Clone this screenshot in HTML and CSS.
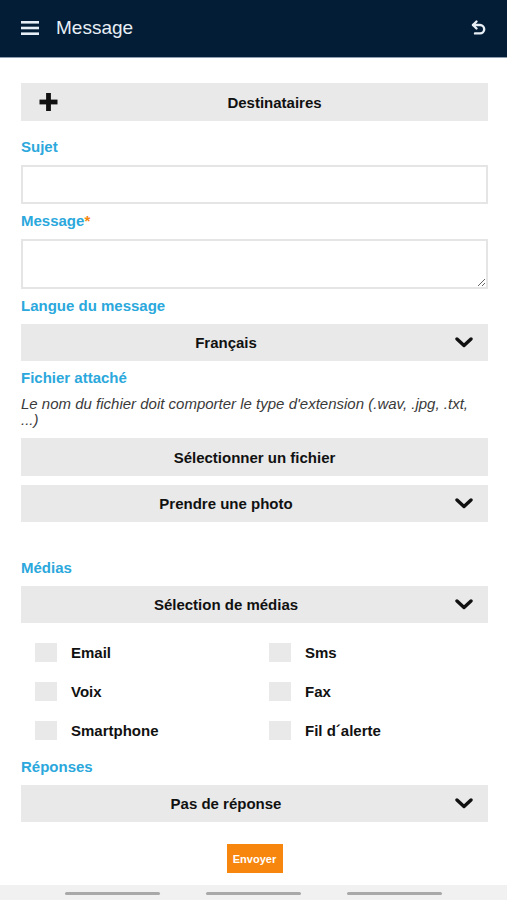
FILE: index.html
```html
<!DOCTYPE html>
<html lang="fr">
<head>
  <meta charset="UTF-8">
  <meta name="viewport" content="width=device-width, initial-scale=1.0">
  <title>Message</title>
  <link rel="stylesheet" href="styles.css">
</head>
<body>

<header class="topbar">
  <svg class="menu-icon" width="18" height="14" viewBox="0 0 18 14">
    <rect x="0" y="0" width="18" height="2.6" fill="#e8eef5"/>
    <rect x="0" y="5.7" width="18" height="2.6" fill="#e8eef5"/>
    <rect x="0" y="11.4" width="18" height="2.6" fill="#e8eef5"/>
  </svg>
  <span class="topbar-title">Message</span>
  <svg class="back-icon" width="16" height="17" viewBox="0 0 16 17">
    <path d="M3 6 H10 a4.2 4.2 0 0 1 0 8.4 H5" fill="none" stroke="#e8eef5" stroke-width="2.4" stroke-linecap="round"/>
    <polyline points="6.5,2.5 3,6 6.5,9.5" fill="none" stroke="#e8eef5" stroke-width="2.4" stroke-linecap="round" stroke-linejoin="round"/>
  </svg>
</header>

<main class="form">
  <button class="bar bar-left-icon recipients">
    <svg class="plus-icon" width="18" height="18" viewBox="0 0 18 18">
      <rect x="6.6" y="0" width="4.8" height="18" fill="#111"/>
      <rect x="0" y="6.6" width="18" height="4.8" fill="#111"/>
    </svg>
    <span class="bar-text">Destinataires</span>
  </button>

  <label class="field-label label-subject">Sujet</label>
  <input class="text-input" type="text">

  <label class="field-label">Message<span class="required">*</span></label>
  <textarea class="text-area"></textarea>

  <label class="field-label">Langue du message</label>
  <div class="bar bar-select">
    <span class="bar-text">Français</span>
    <svg class="chevron" width="18" height="11" viewBox="0 0 18 11"><polyline points="2,2 9,8.5 16,2" fill="none" stroke="#111" stroke-width="3.4" stroke-linecap="round" stroke-linejoin="round"/></svg>
  </div>

  <label class="field-label">Fichier attaché</label>
  <p class="hint">Le nom du fichier doit comporter le type d'extension (.wav, .jpg, .txt,<br>...)</p>

  <button class="bar file-btn"><span class="bar-text">Sélectionner un fichier</span></button>
  <div class="bar bar-select photo">
    <span class="bar-text">Prendre une photo</span>
    <svg class="chevron" width="18" height="11" viewBox="0 0 18 11"><polyline points="2,2 9,8.5 16,2" fill="none" stroke="#111" stroke-width="3.4" stroke-linecap="round" stroke-linejoin="round"/></svg>
  </div>

  <label class="field-label label-medias">Médias</label>
  <div class="bar bar-select">
    <span class="bar-text">Sélection de médias</span>
    <svg class="chevron" width="18" height="11" viewBox="0 0 18 11"><polyline points="2,2 9,8.5 16,2" fill="none" stroke="#111" stroke-width="3.4" stroke-linecap="round" stroke-linejoin="round"/></svg>
  </div>

  <div class="media-grid">
    <div class="media-item"><span class="checkbox"></span>Email</div>
    <div class="media-item"><span class="checkbox"></span>Sms</div>
    <div class="media-item"><span class="checkbox"></span>Voix</div>
    <div class="media-item"><span class="checkbox"></span>Fax</div>
    <div class="media-item"><span class="checkbox"></span>Smartphone</div>
    <div class="media-item"><span class="checkbox"></span>Fil d´alerte</div>
  </div>

  <label class="field-label label-answers">Réponses</label>
  <div class="bar bar-select">
    <span class="bar-text">Pas de réponse</span>
    <svg class="chevron" width="18" height="11" viewBox="0 0 18 11"><polyline points="2,2 9,8.5 16,2" fill="none" stroke="#111" stroke-width="3.4" stroke-linecap="round" stroke-linejoin="round"/></svg>
  </div>

  <div class="send-row">
    <button class="send-btn">Envoyer</button>
  </div>
</main>

<div class="nav-bar">
  <span class="nav-line"></span>
  <span class="nav-line"></span>
  <span class="nav-line"></span>
</div>

</body>
</html>
```

FILE: styles.css
```css
body {
  margin: 0;
  padding: 0;
  font-family: "Liberation Sans", Arial, sans-serif;
  background-color: white;
  color: #111;
}

.topbar {
  height: 57px;
  background-color: #021d35;
  border-bottom: 1px solid #8d9cae;
  display: flex;
  align-items: center;
  padding: 0 21px;
}

.menu-icon {
  margin-right: 17px;
  margin-top: -2px;
}

.topbar-title {
  flex: 1;
  color: #e8eef5;
  font-size: 19px;
  margin-top: -2px;
}

.back-icon {
  margin-top: -3px;
}

.form {
  padding: 25px 19px 0 21px;
  display: flex;
  flex-direction: column;
}

.bar {
  height: 38px;
  background-color: #e9e9e9;
  border: none;
  display: flex;
  align-items: center;
  padding: 0;
  font-family: inherit;
  font-size: 15px;
  font-weight: bold;
  color: #111;
}

.bar-text {
  flex: 1;
  text-align: center;
}

.bar-left-icon .plus-icon {
  width: 40px;
  flex: 0 0 40px;
  box-sizing: border-box;
  padding-left: 15px;
}

.bar-select {
  height: 37px;
}

.bar-select .chevron {
  margin: 0 15px 0 24px;
}

.field-label {
  display: block;
  color: #2ba8dc;
  font-size: 15px;
  font-weight: bold;
  line-height: 18px;
  margin: 8px 0 9px;
}

.label-subject {
  margin-top: 17px;
}

.label-medias {
  margin-top: 37px;
}

.label-answers {
  margin-top: 18px;
}

.required {
  color: #f7860f;
}

.text-input,
.text-area {
  box-sizing: border-box;
  width: 100%;
  border: 2px solid #e5e5e5;
  margin: 0;
  font-family: inherit;
  font-size: 15px;
}

.text-input {
  height: 39px;
}

.text-area {
  height: 50px;
}

.hint {
  margin: 0 0 10px;
  font-size: 15px;
  font-style: italic;
  line-height: 16px;
  color: #3a3a3a;
}

.file-btn {
  margin-bottom: 9px;
}

.media-grid {
  display: grid;
  grid-template-columns: 234px 1fr;
  row-gap: 20px;
  padding-left: 14px;
  margin-top: 20px;
}

.media-item {
  display: flex;
  align-items: center;
  height: 19px;
  font-size: 15px;
  font-weight: bold;
  color: #111;
}

.checkbox {
  width: 22px;
  height: 19px;
  background-color: #e9e9e9;
  margin-right: 14px;
}

.send-row {
  display: flex;
  justify-content: center;
  margin-top: 22px;
}

.send-btn {
  width: 56px;
  height: 29px;
  background-color: #f7860f;
  color: white;
  border: none;
  padding: 0;
  font-family: inherit;
  font-size: 11px;
  font-weight: bold;
  cursor: pointer;
}

.nav-bar {
  margin-top: 12px;
  height: 16px;
  background-color: #f1f1f1;
  display: flex;
  justify-content: center;
  align-items: center;
  gap: 46px;
}

.nav-line {
  width: 95px;
  height: 3px;
  border-radius: 2px;
  background-color: #a9a9a9;
}
```
